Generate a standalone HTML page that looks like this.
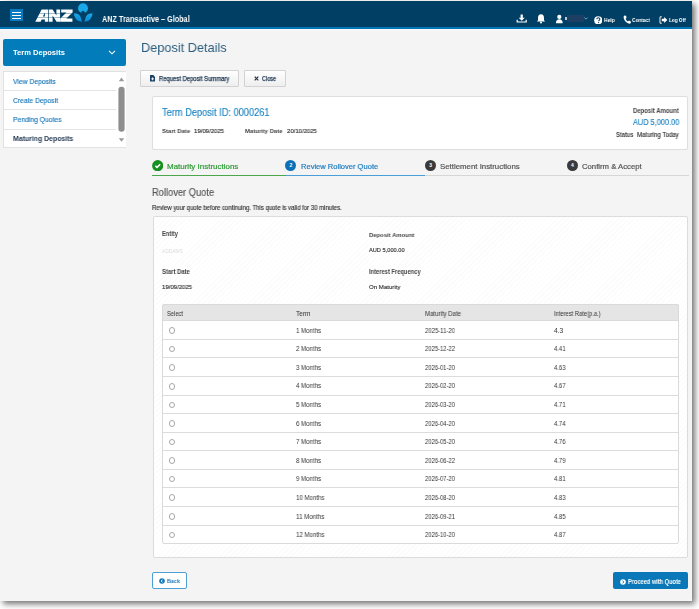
<!DOCTYPE html>
<html><head><meta charset="utf-8"><style>
html,body{margin:0;padding:0;width:699px;height:609px;overflow:hidden;background:#fff;font-family:"Liberation Sans",sans-serif;}
.r{position:absolute;}
.t{position:absolute;line-height:1;white-space:nowrap;font-family:"Liberation Sans",sans-serif;transform-origin:0 0;will-change:transform;}
</style></head><body>
<div class="r" style="left:0px;top:1px;width:692.00px;height:599.50px;background:#f4f4f4;box-shadow:3px 3px 6px rgba(0,0,0,0.55);"></div>
<div class="r" style="left:0px;top:1px;width:692.00px;height:25.50px;background:#023f64;"></div>
<div class="r" style="left:0px;top:26.5px;width:692.00px;height:2.00px;background:#0476b6;"></div>
<div class="r" style="left:0px;top:28.5px;width:692.00px;height:2.00px;background:#f9f8f8;"></div>
<div class="r" style="left:9.5px;top:9px;width:13.50px;height:12.00px;background:#0a7ac0;"></div>
<div class="r" style="left:12px;top:11.5px;width:8.50px;height:1.40px;background:#fff;"></div>
<div class="r" style="left:12px;top:14.5px;width:8.50px;height:1.40px;background:#fff;"></div>
<div class="r" style="left:12px;top:17.5px;width:8.50px;height:1.40px;background:#fff;"></div>
<svg class="r" style="left:0;top:0" width="100" height="28" viewBox="0 0 100 28">
<path fill="#fff" d="M35.3 21.7 L41.6 9.5 H48.2 V21.7 H44.9 V19.6 H41.7 L40.6 21.7 Z M42.9 16.6 H44.9 V12.6 Z"/>
<path fill="#fff" d="M48.9 21.7 V9.5 H52.6 L56.4 15.4 V9.5 H60.1 V21.7 H56.6 L52.6 15.6 V21.7 Z"/>
<path fill="#fff" d="M61.2 9.5 H72.6 V12.6 L66.3 18.6 H72.4 V21.7 H60.2 V18.6 L66.5 12.6 H61.2 Z"/>
<rect x="34" y="13.1" width="40" height="0.5" fill="#023f64" opacity="0.7"/>
<rect x="34" y="17.0" width="40" height="0.5" fill="#023f64" opacity="0.7"/>
</svg>
<svg class="r" style="left:73px;top:3px" width="21" height="20" viewBox="0 0 21 20">
<defs><linearGradient id="lg" x1="0" y1="0" x2="0" y2="1"><stop offset="0" stop-color="#1aa9ea"/><stop offset="1" stop-color="#0b86cf"/></linearGradient></defs>
<circle cx="10" cy="5.3" r="5" fill="#19a7e8"/>
<path d="M8.6 10.4 a1.7 1.7 0 1 1 2.8 0 L11.2 18 h-2.4z" fill="#023f64"/>
<path d="M0.8 10.6 C4.5 9.8 8 11.5 8.8 18.8 C4.5 18.8 1.5 15.5 0.8 10.6Z" fill="url(#lg)"/>
<path d="M19.6 10.6 C15.9 9.8 12.4 11.5 11.6 18.8 C15.9 18.8 18.9 15.5 19.6 10.6Z" fill="url(#lg)"/>
</svg>
<div class="t" style="left:102.30px;top:15.02px;font-size:8.721px;color:#fff;font-weight:700;transform:scaleX(0.8339);">ANZ Transactive – Global</div>
<svg class="r" style="left:516px;top:13px" width="12" height="10" viewBox="0 0 12 10">
<path d="M4.6 1.5h2.2v3.2h1.9l-3 3l-3-3h1.9z" fill="#fff"/><path d="M1.2 6.8v2.2h9v-2.2" stroke="#fff" stroke-width="1.2" fill="none"/></svg>
<svg class="r" style="left:536px;top:13px" width="10" height="11" viewBox="0 0 10 11">
<path d="M5 1.2c2.1 0 3 1.7 3 3.7v2.3l1.1 1.4h-8.2l1.1-1.4v-2.3c0-2 0.9-3.7 3-3.7z" fill="#fff"/><circle cx="5" cy="9.5" r="1" fill="#fff"/></svg>
<svg class="r" style="left:555px;top:14px" width="10" height="10" viewBox="0 0 10 10">
<circle cx="4.3" cy="2.9" r="2.1" fill="#fff"/><path d="M0.9 9.2c0-2.8 1.4-4 3.4-4s3.4 1.2 3.4 4z" fill="#fff"/></svg>
<div class="r" style="left:565px;top:17px;width:1.50px;height:3.00px;background:#b8c8d8;"></div>
<div class="r" style="left:567px;top:15px;width:17.00px;height:6.50px;background:#1d3f63;"></div>
<svg class="r" style="left:584px;top:17px" width="4" height="3" viewBox="0 0 4 3"><path d="M0.3 0.5l1.7 1.7l1.7-1.7" stroke="#9fb3c6" stroke-width="0.8" fill="none"/></svg>
<svg class="r" style="left:593.5px;top:15.5px" width="8.5" height="8.5" viewBox="0 0 10 10">
<circle cx="5" cy="5" r="4.8" fill="#fff"/><path d="M3.3 3.9c0-1.2 0.8-1.9 1.8-1.9s1.8 0.7 1.8 1.6c0 1.2-1.4 1.3-1.4 2.5" stroke="#01406a" stroke-width="1.3" fill="none"/><circle cx="5.4" cy="7.7" r="0.75" fill="#023f64"/></svg>
<div class="t" style="left:603.60px;top:17.33px;font-size:6.105px;color:#fff;font-weight:700;transform:scaleX(0.8164);">Help</div>
<svg class="r" style="left:622.5px;top:15px" width="8" height="9" viewBox="0 0 8 9">
<path d="M1.5 0.5l1.5 0.3l0.6 2l-1 0.9c0.5 1.3 1.3 2.2 2.4 2.8l1-0.9l1.9 0.8l-0.1 1.6c-0.3 0.5-1 0.8-1.6 0.7c-3-0.6-5.5-3.6-5.6-6.6c0-0.7 0.3-1.3 0.9-1.6z" fill="#fff"/></svg>
<div class="t" style="left:632.20px;top:17.33px;font-size:6.105px;color:#fff;font-weight:700;transform:scaleX(0.7922);">Contact</div>
<svg class="r" style="left:658.5px;top:15.5px" width="9" height="8" viewBox="0 0 9 8">
<path d="M2.8 0.8H1v6.4h1.8" stroke="#fff" stroke-width="0.9" fill="none"/><path d="M2.8 2.8h2.4V1.1L8.3 4L5.2 6.9V5.2H2.8z" fill="#fff"/></svg>
<div class="t" style="left:669.20px;top:17.33px;font-size:6.105px;color:#fff;font-weight:700;transform:scaleX(0.7739);">Log Off</div>
<div class="r" style="left:2.8px;top:38.7px;width:123.70px;height:27.00px;background:#027cba;border-radius:2px;"></div>
<div class="t" style="left:13.40px;top:49.20px;font-size:7.558px;color:#fff;font-weight:700;transform:scaleX(0.9954);">Term Deposits</div>
<svg class="r" style="left:108px;top:50px" width="8" height="5" viewBox="0 0 8 5"><path d="M1 0.8l3 3l3-3" stroke="#fff" stroke-width="1.1" fill="none"/></svg>
<div class="r" style="left:3.2px;top:70.5px;width:123.10px;height:77.50px;background:#fff;border:1px solid #e2e2e2;border-right:none;box-sizing:border-box;"></div>
<div class="r" style="left:3.7px;top:90px;width:112.30px;height:1.00px;background:#e4e4e4;"></div>
<div class="r" style="left:3.7px;top:109px;width:112.30px;height:1.00px;background:#e4e4e4;"></div>
<div class="r" style="left:3.7px;top:129px;width:112.30px;height:1.00px;background:#e4e4e4;"></div>
<div class="t" style="left:13.00px;top:77.78px;font-size:7.703px;color:#1676b9;font-weight:400;transform:scaleX(0.8794);-webkit-text-stroke:0.15px #1676b9;">View Deposits</div>
<div class="t" style="left:13.00px;top:96.78px;font-size:7.703px;color:#1676b9;font-weight:400;transform:scaleX(0.8758);-webkit-text-stroke:0.15px #1676b9;">Create Deposit</div>
<div class="t" style="left:13.00px;top:116.48px;font-size:7.703px;color:#1676b9;font-weight:400;transform:scaleX(0.8815);-webkit-text-stroke:0.15px #1676b9;">Pending Quotes</div>
<div class="t" style="left:12.80px;top:136.17px;font-size:7.122px;color:#1f3550;font-weight:700;transform:scaleX(0.9722);">Maturing Deposits</div>
<svg class="r" style="left:117px;top:75px" width="9" height="70" viewBox="0 0 9 70">
<path d="M1.8 6.2h5.4l-2.7-3.6z" fill="#9a9a9a"/>
<rect x="1.4" y="11.8" width="6.2" height="45" rx="3" fill="#8e8e8e"/>
<path d="M1.8 63.2h5.4l-2.7 3.6z" fill="#9a9a9a"/></svg>
<div class="t" style="left:141.00px;top:40.76px;font-size:13.517px;color:#2b5d7e;font-weight:400;transform:scaleX(0.9438);">Deposit Details</div>
<div class="r" style="left:140.2px;top:70.3px;width:99.10px;height:16.40px;background:linear-gradient(#ffffff,#eeeeee);border:1px solid #d2d2d2;box-sizing:border-box;border-radius:1px;"></div>
<div class="r" style="left:244px;top:70.3px;width:41.80px;height:16.40px;background:linear-gradient(#ffffff,#eeeeee);border:1px solid #d2d2d2;box-sizing:border-box;border-radius:1px;"></div>
<svg class="r" style="left:149.9px;top:75.2px" width="5.2" height="6.6" viewBox="0 0 5.2 6.6"><path d="M0 0h3.3l1.9 1.9v4.7h-5.2z" fill="#1f4566"/><rect x="1.2" y="3.4" width="2.8" height="0.9" fill="#fff"/><rect x="2.15" y="2.45" width="0.9" height="2.8" fill="#fff"/></svg>
<div class="t" style="left:158.60px;top:75.96px;font-size:6.541px;color:#1b3550;font-weight:400;transform:scaleX(0.9008);-webkit-text-stroke:0.25px #1b3550;">Request Deposit Summary</div>
<svg class="r" style="left:254px;top:76px" width="5" height="5" viewBox="0 0 5 5"><path d="M0.7 0.7l3.6 3.6M4.3 0.7l-3.6 3.6" stroke="#1f3346" stroke-width="1.2"/></svg>
<div class="t" style="left:261.90px;top:75.96px;font-size:6.541px;color:#1b3550;font-weight:400;transform:scaleX(0.8431);-webkit-text-stroke:0.25px #1b3550;">Close</div>
<div class="r" style="left:152.3px;top:96.3px;width:536.00px;height:54.20px;background:#fff;border:1px solid #dedede;box-sizing:border-box;border-radius:2px;"></div>
<div class="t" style="left:162.30px;top:108.24px;font-size:10.465px;color:#1d84c2;font-weight:400;transform:scaleX(0.8859);-webkit-text-stroke:0.15px #1d84c2;">Term Deposit ID: 0000261</div>
<div class="t" style="left:161.50px;top:128.13px;font-size:6.105px;color:#444;font-weight:700;transform:scaleX(0.9779);">Start Date</div>
<div class="t" style="left:193.70px;top:128.13px;font-size:6.105px;color:#333;font-weight:400;transform:scaleX(0.9819);-webkit-text-stroke:0.15px #333;">19/09/2025</div>
<div class="t" style="left:244.50px;top:128.13px;font-size:6.105px;color:#444;font-weight:700;transform:scaleX(0.9697);">Maturity Date</div>
<div class="t" style="left:287.00px;top:128.13px;font-size:6.105px;color:#333;font-weight:400;transform:scaleX(0.9786);-webkit-text-stroke:0.15px #333;">20/10/2025</div>
<div class="t" style="left:633.00px;top:107.66px;font-size:6.541px;color:#444;font-weight:700;transform:scaleX(0.9112);">Deposit Amount</div>
<div class="t" style="left:632.50px;top:118.16px;font-size:8.430px;color:#1d84c2;font-weight:400;transform:scaleX(0.8743);-webkit-text-stroke:0.15px #1d84c2;">AUD 5,000.00</div>
<div class="t" style="left:616.00px;top:132.49px;font-size:6.395px;color:#444;font-weight:700;transform:scaleX(0.8954);">Status</div>
<div class="t" style="left:637.00px;top:132.49px;font-size:6.395px;color:#333;font-weight:400;transform:scaleX(0.9585);-webkit-text-stroke:0.15px #333;">Maturing Today</div>
<div class="r" style="left:152px;top:174.8px;width:133.50px;height:1.20px;background:#4aa84a;"></div>
<div class="r" style="left:285.5px;top:174.8px;width:139.50px;height:1.20px;background:#4a9fd8;"></div>
<div class="r" style="left:425px;top:174.9px;width:263.50px;height:1.00px;background:#d6d6d6;"></div>
<svg class="r" style="left:151.8px;top:159.8px" width="11.4" height="11.4" viewBox="0 0 11 11"><circle cx="5.5" cy="5.5" r="5.4" fill="#16901e"/><path d="M3.2 5.6l1.7 1.5l3-3" stroke="#fff" stroke-width="1.5" fill="none"/></svg>
<div class="t" style="left:167.00px;top:162.70px;font-size:7.558px;color:#2e9a35;font-weight:400;transform:scaleX(1.0559);-webkit-text-stroke:0.2px #2e9a35;">Maturity Instructions</div>
<div class="r" style="left:285.2px;top:159.7px;width:11.2px;height:11.2px;border-radius:50%;background:#0b72b8;color:#fff;font-size:5px;font-weight:700;line-height:11.2px;text-align:center;font-family:Liberation Sans">2</div>
<div class="t" style="left:300.50px;top:162.70px;font-size:7.558px;color:#1d7cc0;font-weight:400;transform:scaleX(0.9987);-webkit-text-stroke:0.2px #1d7cc0;">Review Rollover Quote</div>
<div class="r" style="left:425.0px;top:159.7px;width:11.2px;height:11.2px;border-radius:50%;background:#3a3a3a;color:#fff;font-size:5px;font-weight:700;line-height:11.2px;text-align:center;font-family:Liberation Sans">3</div>
<div class="t" style="left:439.90px;top:162.70px;font-size:7.558px;color:#555;font-weight:400;transform:scaleX(1.0381);-webkit-text-stroke:0.2px #555;">Settlement Instructions</div>
<div class="r" style="left:566.8px;top:159.7px;width:11.2px;height:11.2px;border-radius:50%;background:#3a3a3a;color:#fff;font-size:5px;font-weight:700;line-height:11.2px;text-align:center;font-family:Liberation Sans">4</div>
<div class="t" style="left:581.80px;top:162.70px;font-size:7.558px;color:#555;font-weight:400;transform:scaleX(1.0225);-webkit-text-stroke:0.2px #555;">Confirm &amp; Accept</div>
<div class="t" style="left:152.30px;top:187.69px;font-size:10.174px;color:#555;font-weight:400;transform:scaleX(0.9180);-webkit-text-stroke:0.15px #555;">Rollover Quote</div>
<div class="t" style="left:152.00px;top:205.29px;font-size:6.395px;color:#333;font-weight:400;transform:scaleX(0.9402);-webkit-text-stroke:0.15px #333;">Review your quote before continuing. This quote is valid for 30 minutes.</div>
<div class="r" style="left:152.5px;top:215.5px;width:535.50px;height:342.50px;background:repeating-linear-gradient(-45deg,#ffffff 0px,#ffffff 2.6px,#fbfbfb 2.6px,#fbfbfb 3.6px);border:1px solid #dcdcdc;box-sizing:border-box;border-radius:2px;"></div>
<div class="t" style="left:162.00px;top:231.46px;font-size:6.541px;color:#444;font-weight:700;transform:scaleX(0.8751);">Entity</div>
<div class="t" style="left:162.00px;top:247.81px;font-size:6.250px;color:#dcdcdc;font-weight:400;transform:scaleX(0.7854);">ADDAMS</div>
<div class="t" style="left:162.00px;top:268.79px;font-size:6.395px;color:#444;font-weight:700;transform:scaleX(0.9235);">Start Date</div>
<div class="t" style="left:162.00px;top:284.33px;font-size:6.105px;color:#333;font-weight:400;transform:scaleX(0.9819);-webkit-text-stroke:0.15px #333;">19/09/2025</div>
<div class="t" style="left:368.70px;top:231.51px;font-size:6.250px;color:#444;font-weight:700;transform:scaleX(0.9431);">Deposit Amount</div>
<div class="t" style="left:368.70px;top:248.10px;font-size:5.669px;color:#333;font-weight:400;transform:scaleX(0.9997);-webkit-text-stroke:0.15px #333;">AUD 5,000.00</div>
<div class="t" style="left:368.70px;top:268.79px;font-size:6.395px;color:#444;font-weight:700;transform:scaleX(0.9053);">Interest Frequency</div>
<div class="t" style="left:368.70px;top:284.33px;font-size:6.105px;color:#333;font-weight:400;transform:scaleX(0.9921);-webkit-text-stroke:0.15px #333;">On Maturity</div>
<div class="r" style="left:162px;top:303.9px;width:516.90px;height:239.80px;background:#fff;border:1px solid #dadada;box-sizing:border-box;border-radius:2px;"></div>
<div class="r" style="left:162px;top:303.5px;width:516.90px;height:17.50px;background:#e5e5e5;border:1px solid #dadada;box-sizing:border-box;border-radius:2px 2px 0 0;"></div>
<div class="t" style="left:167.00px;top:310.56px;font-size:6.541px;color:#333;font-weight:400;transform:scaleX(0.8858);">Select</div>
<div class="t" style="left:296.00px;top:310.56px;font-size:6.541px;color:#333;font-weight:400;transform:scaleX(0.9771);">Term</div>
<div class="t" style="left:425.00px;top:310.56px;font-size:6.541px;color:#333;font-weight:400;transform:scaleX(0.9257);">Maturity Date</div>
<div class="t" style="left:553.60px;top:310.56px;font-size:6.541px;color:#333;font-weight:400;transform:scaleX(0.8860);">Interest Rate(p.a.)</div>
<div class="r" style="left:168.80px;top:327.20px;width:6.6px;height:6.6px;border:0.7px solid #a8a8a8;border-radius:50%;box-sizing:border-box;background:#fff"></div>
<div class="t" style="left:296.00px;top:327.74px;font-size:6.686px;color:#333;font-weight:400;transform:scaleX(0.9164);">1 Months</div>
<div class="t" style="left:425.00px;top:327.74px;font-size:6.686px;color:#333;font-weight:400;transform:scaleX(0.8901);">2025-11-20</div>
<div class="t" style="left:553.60px;top:327.74px;font-size:6.686px;color:#333;font-weight:400;transform:scaleX(0.9684);">4.3</div>
<div class="r" style="left:163px;top:339px;width:515.00px;height:1.00px;background:#dcdcdc;"></div>
<div class="r" style="left:168.80px;top:345.78px;width:6.6px;height:6.6px;border:0.7px solid #a8a8a8;border-radius:50%;box-sizing:border-box;background:#fff"></div>
<div class="t" style="left:296.00px;top:346.32px;font-size:6.686px;color:#333;font-weight:400;transform:scaleX(0.9164);">2 Months</div>
<div class="t" style="left:425.00px;top:346.32px;font-size:6.686px;color:#333;font-weight:400;transform:scaleX(0.8772);">2025-12-22</div>
<div class="t" style="left:553.60px;top:346.32px;font-size:6.686px;color:#333;font-weight:400;transform:scaleX(0.8916);">4.41</div>
<div class="r" style="left:163px;top:357px;width:515.00px;height:1.00px;background:#dcdcdc;"></div>
<div class="r" style="left:168.80px;top:364.37px;width:6.6px;height:6.6px;border:0.7px solid #a8a8a8;border-radius:50%;box-sizing:border-box;background:#fff"></div>
<div class="t" style="left:296.00px;top:364.91px;font-size:6.686px;color:#333;font-weight:400;transform:scaleX(0.9164);">3 Months</div>
<div class="t" style="left:425.00px;top:364.91px;font-size:6.686px;color:#333;font-weight:400;transform:scaleX(0.8772);">2026-01-20</div>
<div class="t" style="left:553.60px;top:364.91px;font-size:6.686px;color:#333;font-weight:400;transform:scaleX(0.8916);">4.63</div>
<div class="r" style="left:163px;top:376px;width:515.00px;height:1.00px;background:#dcdcdc;"></div>
<div class="r" style="left:168.80px;top:382.95px;width:6.6px;height:6.6px;border:0.7px solid #a8a8a8;border-radius:50%;box-sizing:border-box;background:#fff"></div>
<div class="t" style="left:296.00px;top:383.49px;font-size:6.686px;color:#333;font-weight:400;transform:scaleX(0.9164);">4 Months</div>
<div class="t" style="left:425.00px;top:383.49px;font-size:6.686px;color:#333;font-weight:400;transform:scaleX(0.8772);">2026-02-20</div>
<div class="t" style="left:553.60px;top:383.49px;font-size:6.686px;color:#333;font-weight:400;transform:scaleX(0.8916);">4.67</div>
<div class="r" style="left:163px;top:395px;width:515.00px;height:1.00px;background:#dcdcdc;"></div>
<div class="r" style="left:168.80px;top:401.53px;width:6.6px;height:6.6px;border:0.7px solid #a8a8a8;border-radius:50%;box-sizing:border-box;background:#fff"></div>
<div class="t" style="left:296.00px;top:402.07px;font-size:6.686px;color:#333;font-weight:400;transform:scaleX(0.9164);">5 Months</div>
<div class="t" style="left:425.00px;top:402.07px;font-size:6.686px;color:#333;font-weight:400;transform:scaleX(0.8772);">2026-03-20</div>
<div class="t" style="left:553.60px;top:402.07px;font-size:6.686px;color:#333;font-weight:400;transform:scaleX(0.8916);">4.71</div>
<div class="r" style="left:163px;top:413px;width:515.00px;height:1.00px;background:#dcdcdc;"></div>
<div class="r" style="left:168.80px;top:420.12px;width:6.6px;height:6.6px;border:0.7px solid #a8a8a8;border-radius:50%;box-sizing:border-box;background:#fff"></div>
<div class="t" style="left:296.00px;top:420.66px;font-size:6.686px;color:#333;font-weight:400;transform:scaleX(0.9164);">6 Months</div>
<div class="t" style="left:425.00px;top:420.66px;font-size:6.686px;color:#333;font-weight:400;transform:scaleX(0.8772);">2026-04-20</div>
<div class="t" style="left:553.60px;top:420.66px;font-size:6.686px;color:#333;font-weight:400;transform:scaleX(0.8916);">4.74</div>
<div class="r" style="left:163px;top:432px;width:515.00px;height:1.00px;background:#dcdcdc;"></div>
<div class="r" style="left:168.80px;top:438.70px;width:6.6px;height:6.6px;border:0.7px solid #a8a8a8;border-radius:50%;box-sizing:border-box;background:#fff"></div>
<div class="t" style="left:296.00px;top:439.24px;font-size:6.686px;color:#333;font-weight:400;transform:scaleX(0.9164);">7 Months</div>
<div class="t" style="left:425.00px;top:439.24px;font-size:6.686px;color:#333;font-weight:400;transform:scaleX(0.8772);">2026-05-20</div>
<div class="t" style="left:553.60px;top:439.24px;font-size:6.686px;color:#333;font-weight:400;transform:scaleX(0.8916);">4.76</div>
<div class="r" style="left:163px;top:450px;width:515.00px;height:1.00px;background:#dcdcdc;"></div>
<div class="r" style="left:168.80px;top:457.28px;width:6.6px;height:6.6px;border:0.7px solid #a8a8a8;border-radius:50%;box-sizing:border-box;background:#fff"></div>
<div class="t" style="left:296.00px;top:457.82px;font-size:6.686px;color:#333;font-weight:400;transform:scaleX(0.9164);">8 Months</div>
<div class="t" style="left:425.00px;top:457.82px;font-size:6.686px;color:#333;font-weight:400;transform:scaleX(0.8772);">2026-06-22</div>
<div class="t" style="left:553.60px;top:457.82px;font-size:6.686px;color:#333;font-weight:400;transform:scaleX(0.8916);">4.79</div>
<div class="r" style="left:163px;top:469px;width:515.00px;height:1.00px;background:#dcdcdc;"></div>
<div class="r" style="left:168.80px;top:475.87px;width:6.6px;height:6.6px;border:0.7px solid #a8a8a8;border-radius:50%;box-sizing:border-box;background:#fff"></div>
<div class="t" style="left:296.00px;top:476.41px;font-size:6.686px;color:#333;font-weight:400;transform:scaleX(0.9164);">9 Months</div>
<div class="t" style="left:425.00px;top:476.41px;font-size:6.686px;color:#333;font-weight:400;transform:scaleX(0.8772);">2026-07-20</div>
<div class="t" style="left:553.60px;top:476.41px;font-size:6.686px;color:#333;font-weight:400;transform:scaleX(0.8916);">4.81</div>
<div class="r" style="left:163px;top:487px;width:515.00px;height:1.00px;background:#dcdcdc;"></div>
<div class="r" style="left:168.80px;top:494.45px;width:6.6px;height:6.6px;border:0.7px solid #a8a8a8;border-radius:50%;box-sizing:border-box;background:#fff"></div>
<div class="t" style="left:296.00px;top:494.99px;font-size:6.686px;color:#333;font-weight:400;transform:scaleX(0.9130);">10 Months</div>
<div class="t" style="left:425.00px;top:494.99px;font-size:6.686px;color:#333;font-weight:400;transform:scaleX(0.8772);">2026-08-20</div>
<div class="t" style="left:553.60px;top:494.99px;font-size:6.686px;color:#333;font-weight:400;transform:scaleX(0.8916);">4.83</div>
<div class="r" style="left:163px;top:506px;width:515.00px;height:1.00px;background:#dcdcdc;"></div>
<div class="r" style="left:168.80px;top:513.03px;width:6.6px;height:6.6px;border:0.7px solid #a8a8a8;border-radius:50%;box-sizing:border-box;background:#fff"></div>
<div class="t" style="left:296.00px;top:513.57px;font-size:6.686px;color:#333;font-weight:400;transform:scaleX(0.9277);">11 Months</div>
<div class="t" style="left:425.00px;top:513.57px;font-size:6.686px;color:#333;font-weight:400;transform:scaleX(0.8772);">2026-09-21</div>
<div class="t" style="left:553.60px;top:513.57px;font-size:6.686px;color:#333;font-weight:400;transform:scaleX(0.8916);">4.85</div>
<div class="r" style="left:163px;top:525px;width:515.00px;height:1.00px;background:#dcdcdc;"></div>
<div class="r" style="left:168.80px;top:531.62px;width:6.6px;height:6.6px;border:0.7px solid #a8a8a8;border-radius:50%;box-sizing:border-box;background:#fff"></div>
<div class="t" style="left:296.00px;top:532.16px;font-size:6.686px;color:#333;font-weight:400;transform:scaleX(0.9130);">12 Months</div>
<div class="t" style="left:425.00px;top:532.16px;font-size:6.686px;color:#333;font-weight:400;transform:scaleX(0.8772);">2026-10-20</div>
<div class="t" style="left:553.60px;top:532.16px;font-size:6.686px;color:#333;font-weight:400;transform:scaleX(0.8916);">4.87</div>
<div class="r" style="left:152.1px;top:572.3px;width:34.60px;height:16.50px;background:#fff;border:1px solid #4d9fd4;box-sizing:border-box;border-radius:2px;"></div>
<svg class="r" style="left:158.5px;top:578.4px;overflow:visible" width="6" height="6" viewBox="0 0 6 6"><circle cx="3" cy="3" r="2.8" fill="#1478bd"/><path d="M3.5 1.6l-1.3 1.4l1.3 1.4" stroke="#fff" stroke-width="0.9" fill="none"/></svg>
<div class="t" style="left:166.90px;top:578.86px;font-size:5.959px;color:#1a78bc;font-weight:700;transform:scaleX(0.9050);">Back</div>
<div class="r" style="left:613.4px;top:572.2px;width:74.90px;height:16.80px;background:#0a78b8;border-radius:2px;"></div>
<svg class="r" style="left:620px;top:578.7px;overflow:visible" width="6" height="6" viewBox="0 0 6 6"><circle cx="3" cy="3" r="2.8" fill="#fff"/><path d="M2.5 1.6l1.3 1.4l-1.3 1.4" stroke="#0a78b8" stroke-width="0.9" fill="none"/></svg>
<div class="t" style="left:628.20px;top:578.89px;font-size:6.395px;color:#fff;font-weight:700;transform:scaleX(0.8842);">Proceed with Quote</div>
</body></html>
